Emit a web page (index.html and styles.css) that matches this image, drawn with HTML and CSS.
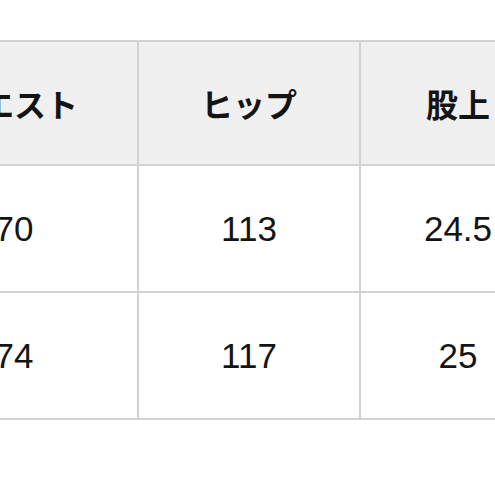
FILE: index.html
```html
<!DOCTYPE html>
<html lang="ja">
<head>
<meta charset="utf-8">
<link rel="stylesheet" href="styles.css">
</head>
<body>
<div class="wrap">
<table class="size">
<colgroup>
<col class="c1"><col class="c2"><col class="c3"><col class="c4">
</colgroup>
<thead>
<tr><th>ウエスト</th><th>ヒップ</th><th>股上</th><th>股下</th></tr>
</thead>
<tbody>
<tr><td>70</td><td>113</td><td>24.5</td><td>70</td></tr>
<tr><td>74</td><td>117</td><td>25</td><td>71</td></tr>
</tbody>
</table>
</div>
</body>
</html>
```
FILE: styles.css
```css
html, body {
  margin: 0;
  padding: 0;
  background: #fff;
  overflow: hidden;
  width: 495px;
  height: 495px;
}
.wrap {
  padding-top: 40px;
  margin-left: -111px;
}
.size {
  border-collapse: collapse;
  table-layout: fixed;
  width: 900px;
  font-family: "Liberation Sans", "Noto Sans CJK JP", sans-serif;
  color: #141414;
}
.c1 { width: 248px; }
.c2 { width: 222px; }
.c3 { width: 196px; }
.c4 { width: 234px; }
.size th, .size td {
  border: 2px solid #d2d2d2;
  text-align: center;
  vertical-align: middle;
  padding: 0;
  white-space: nowrap;
}
.size th {
  background: #f0f0f0;
  height: 122px;
  font-size: 32px;
  font-weight: bold;
  font-family: "Noto Sans CJK JP", sans-serif;
}
.size td {
  height: 125px;
  font-size: 35px;
  font-weight: normal;
}
```
